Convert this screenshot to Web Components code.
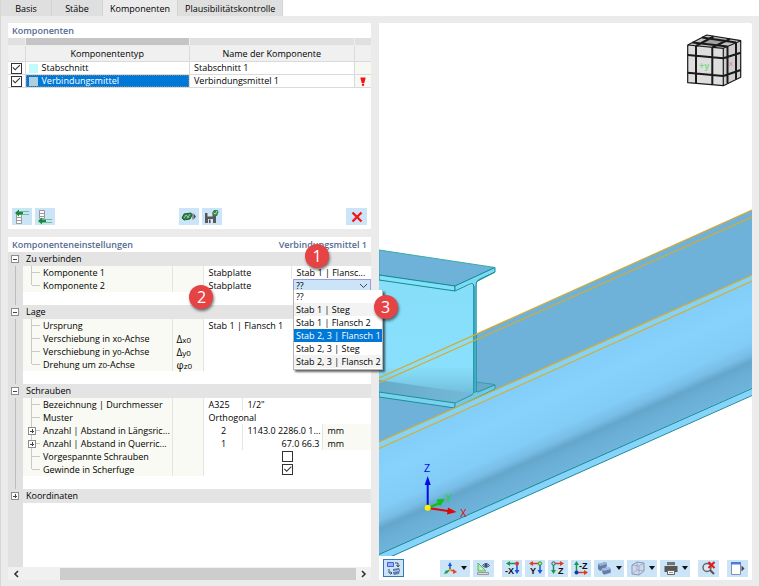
<!DOCTYPE html>
<html lang="de">
<head>
<meta charset="utf-8">
<title>Komponenten</title>
<style>
body { margin: 0; background: #ebebeb; color: #000; font: 500 9px/13px "Open Sans", "Noto Sans", sans-serif; }
</style>
</head>
<body>
<joint-app></joint-app>
<script>
const define = (name, html, setup) => {
  const template = document.createElement('template');
  template.innerHTML = html;
  customElements.define(name, class extends HTMLElement {
    constructor() {
      super();
      this.attachShadow({ mode: 'open' }).append(template.content.cloneNode(true));
    }
    connectedCallback() { if (setup) setup(this, this.shadowRoot); }
  });
};

/* Numbered red callout */
define('call-out', `
<style>
:host { position: absolute; z-index: 5; width: 24px; height: 24px; border-radius: 50%; background: #e64345; color: #fff;
  font: 16px/24px "Open Sans", sans-serif; text-align: center; box-shadow: 1px 2px 3px #0008; }
</style><slot></slot>`);

/* Blue tool button, optionally with a menu arrow */
define('tool-button', `
<style>
:host { display: block; }
button { display: flex; align-items: center; justify-content: center; gap: 3px; box-sizing: border-box; min-width: 20px; height: 17px;
  margin: 0; padding: 0 1px; border: 0; background: #cce4f7; font: inherit; }
:host([wide]) button { min-width: 21px; }
:host([menu]) button { min-width: 30px; }
:host([pressed]) button { min-width: 21px; height: 18px; border: 1px solid #3578b4; }
i { display: none; border: 3px solid transparent; border-top: 4px solid #111; border-bottom: 0; }
:host([menu]) i { display: block; }
</style><button type="button"><slot></slot><i></i></button>`, (host, root) => {
  root.querySelector('button').setAttribute('aria-label', host.getAttribute('label'));
});

/* White panel with a blue title line */
define('panel-box', `
<style>
:host { display: flex; flex-direction: column; background: #fff; min-width: 0; }
header { position: relative; display: flex; justify-content: space-between; padding: 1px 4px; color: #566b92; font-weight: 600; }
</style>
<header><slot name="title"></slot><slot name="detail"></slot></header><slot></slot>`);

define('tab-bar', `
<style>
:host { display: flex; align-items: stretch; height: 16px; background: #fff; }
button { border: 0; border-right: 1px solid #d3d3d3; margin: 0; padding: 0 7px; background: #dfdfdf; color: inherit; font: inherit; line-height: 15px; min-width: 51px; }
button[aria-selected=true] { background: #ebebeb; }
</style>
<button role="tab">Basis</button><button role="tab">Stäbe</button><button role="tab" aria-selected="true">Komponenten</button><button role="tab">Plausibilitätskontrolle</button>`);

const checkCss = `
input[type=checkbox] { appearance: none; display: block; box-sizing: border-box; width: 11px; height: 11px; margin: 0 auto; border: 1px solid #333; background: #fff; }
input[type=checkbox]:checked::after { content: ""; display: block; width: 9px; height: 9px; background: #333;
  clip-path: polygon(8% 48%, 16% 40%, 38% 62%, 86% 14%, 94% 22%, 38% 78%); }`;

define('component-table', `
<style>${checkCss}
:host { display: block; }
table { width: 100%; border-collapse: collapse; table-layout: fixed; }
th, td { padding: 0; height: 12px; line-height: 12px; border: 1px solid #dadada; border-left: 0; white-space: nowrap; font-weight: inherit; text-align: left; }
.strip td { height: 7px; border-color: #eee; border-top: 0; background: #e0e0e0; }
.strip td.on { background: #c5c5c5; }
thead th { height: 15px; text-align: center; background: #f0f0f0; }
td.name { padding-left: 4px; }
td.flag { background: #f8f8f2; text-align: center; }
td:last-child, th:last-child { border-right: 0; }
.type { display: flex; align-items: center; gap: 4px; padding-left: 3px; height: 12px; }
.type::before { content: ""; width: 9px; height: 9px; background: #c5fafd; }
.sel .type { background: #0078d7; color: #fff; outline: 1px dotted #7a8a90; outline-offset: -1px; }
.sel .type::before { background: #b0cfdc; }
svg { display: block; margin: auto; }
</style>
<table>
<colgroup><col style="width:17px"><col><col><col style="width:17px"></colgroup>
<thead>
<tr class="strip"><td></td><td class="on"></td><td></td><td></td></tr>
<tr><th></th><th scope="col">Komponententyp</th><th scope="col">Name der Komponente</th><th></th></tr>
</thead>
<tbody>
<tr><td><input type="checkbox" checked aria-label="Stabschnitt 1"></td><td><div class="type">Stabschnitt</div></td><td class="name">Stabschnitt 1</td><td class="flag"></td></tr>
<tr class="sel"><td><input type="checkbox" checked aria-label="Verbindungsmittel 1"></td><td><div class="type">Verbindungsmittel</div></td><td class="name">Verbindungsmittel 1</td><td class="flag"><svg width="6" height="9" viewBox="0 0 6 9"><path d="M.5.5h5v1L4.300 6H1.700L.5 1.500Z" fill="#f01414"/><circle cx="3" cy="7.700" r="1.200" fill="#f01414"/></svg></td></tr>
</tbody>
</table>`);

define('component-tools', `
<style>
:host { display: flex; justify-content: space-between; padding: 4px; }
div { display: flex; gap: 3px; }
svg { display: block; }
</style>
<div>
<tool-button label="Davor einfügen"><svg width="18" height="16" viewBox="0 0 18 16"><g fill="#fff" stroke="#999"><path d="M3.500 8.500h5v3h-5zM3.500 11.500h5v3h-5zM3.500 5.500h5v3h-5z"/></g><path d="M2 4 6 .5v2h4v3H6v2Z" fill="#138c3c"/><path d="M10 2.500h6M10 5.500h6" stroke="#6cc48e"/></svg></tool-button>
<tool-button label="Danach einfügen"><svg width="18" height="16" viewBox="0 0 18 16"><g fill="#fff" stroke="#999"><path d="M3.500 1.500h5v3h-5zM3.500 4.500h5v3h-5zM3.500 7.500h5v2h-5z"/></g><path d="M2 12 6 8.500v2h4v3H6v2Z" fill="#138c3c"/><path d="M10 10.500h6M10 13.500h6" stroke="#6cc48e"/></svg></tool-button>
</div>
<div>
<tool-button label="Bibliothek"><svg width="18" height="15" viewBox="0 0 18 15"><path d="m2 9 2-4 7-1 1 2-2 4-6 1Z" fill="#2f8549" stroke="#1d5c33"/><path d="m4 9 2-3 2 2 2-3M7 9l2-1" stroke="#96c9a2" fill="none"/><path d="M12.500 4.500h1v6h-1zM14 5l2 2.500L14 10Z" fill="#4b524d"/></svg></tool-button>
<tool-button label="Speichern"><svg width="18" height="15" viewBox="0 0 18 15"><path d="M2 4h9l2 2v8H2Z" fill="#55585e"/><path d="M4.500 4h5v3.500h-5zM5 10h5v4H5z" fill="#dbe8f2"/><path d="M6 10.500h1.500V14H6z" fill="#4b4c50"/><path d="m9 4 2-3h3.500l1 2-1.500 4h-3Z" fill="#2f8549"/><path d="m10.500 4 2 1 1.500-3" fill="none" stroke="#b9dfc3"/></svg></tool-button>
</div>
<div><tool-button wide label="Löschen"><svg width="12" height="12" viewBox="0 0 12 12"><path d="m1.500 1.500 9 9M10.500 1.500l-9 9" stroke="#f01818" stroke-width="2.400"/></svg></tool-button></div>`);

/* Combo box shown with its list open */
define('combo-box', `
<style>
:host { display: block; position: relative; }
select { appearance: none; display: block; box-sizing: border-box; width: 100%; height: 13px; margin: 0; padding: 0 2px; border: 1px solid #9c9be2; border-radius: 0;
  background: #cce4f7; color: inherit; font: inherit; line-height: 11px; }
.arrow { position: absolute; right: 3px; top: 4px; pointer-events: none; }
ul { position: absolute; z-index: 4; left: 0; top: 11px; width: max-content; margin: 0; padding: 0 1px 1px 2px; list-style: none; background: #fff;
  border: 1px solid #b5b5b5; border-top: 0; box-shadow: 2px 2px 2px #0009; }
li { margin: 0 -1px 0 -2px; padding: 0 1px 0 2px; white-space: nowrap; }
li:nth-child(even) { background: #f3f3f3; }
li[aria-selected=true] { background: #0078d7; color: #fff; }
call-out { right: -16px; top: 5px; }
</style>
<select aria-label="Komponente 2"><option>??</option><option>Stab 1 | Steg</option><option>Stab 1 | Flansch 2</option><option>Stab 2, 3 | Flansch 1</option><option>Stab 2, 3 | Steg</option><option>Stab 2, 3 | Flansch 2</option></select>
<svg class="arrow" width="9" height="6" viewBox="0 0 9 6"><path d="m1 1 3.500 3.500L8 1" fill="none" stroke="#444"/></svg>
<ul role="listbox"><li role="option">??</li><li role="option">Stab 1 | Steg</li><li role="option">Stab 1 | Flansch 2</li><li role="option" aria-selected="true">Stab 2, 3 | Flansch 1</li><li role="option">Stab 2, 3 | Steg</li><li role="option">Stab 2, 3 | Flansch 2</li><call-out>3</call-out></ul>`);

define('tree-toggle', `
<style>
:host { display: block; }
button { display: block; width: 8px; height: 8px; margin: 0; padding: 0; border: 1px solid #8d8d8d; box-sizing: border-box;
  background: linear-gradient(#444, #444) center / 4px 1px no-repeat #fff; }
:host([closed]) button { background: linear-gradient(#444, #444) center / 4px 1px no-repeat, linear-gradient(#444, #444) center / 1px 4px no-repeat, #fff; }
</style><button type="button"></button>`, (host, root) => {
  root.querySelector('button').setAttribute('aria-label', host.hasAttribute('closed') ? 'Aufklappen' : 'Zuklappen');
});

define('settings-tree', `
<style>${checkCss}
:host { display: flex; flex-direction: column; flex: 1; background: linear-gradient(#e1e1e1, #e1e1e1) left / 15px 100% no-repeat; }
table { width: 100%; border-collapse: collapse; table-layout: fixed; }
th, td { position: relative; height: 13px; padding: 0; font-weight: inherit; text-align: left; white-space: nowrap; line-height: 13px; }
td { padding-left: 4px; }
.head th, .head td { height: 14px; background: #e4e4e4; line-height: 14px; }
.head th { padding-left: 3px; }
.gut { padding: 0; background: linear-gradient(#bbb, #bbb) 7px 0 / 1px 100% no-repeat #e1e1e1; }
.head .gut { background: #e1e1e1; }
.gut tree-toggle { margin-left: 3px; }
.lab { padding-left: 20px; overflow: hidden; text-overflow: ellipsis; border-right: 1px solid #e4e4e0;
  background: linear-gradient(#c9c9c9, #c9c9c9) 8px 0 / 1px 100% no-repeat, linear-gradient(#c9c9c9, #c9c9c9) 9px 6px / 8px 1px no-repeat, #f9faf3; }
.last .lab { background: linear-gradient(#c9c9c9, #c9c9c9) 8px 0 / 1px 6px no-repeat, linear-gradient(#c9c9c9, #c9c9c9) 9px 6px / 8px 1px no-repeat, #f9faf3; }
.lab tree-toggle { position: absolute; left: 5px; top: 3px; }
.sym { padding-left: 3px; background: #f9faf3; border-right: 1px solid #e4e4e0; font-size: 10px; line-height: 12px; }
.line { border-left: 1px solid #e4e4e0; }
.num { text-align: center; padding: 0; }
.right { text-align: right; padding: 0 3px 0 0; }
.unit { background: #f9faf3; border-left: 1px solid #e4e4e0; }
.combo { padding: 0 0 0 1px; }
small { font-size: 8px; line-height: 0; }
.space { flex: 1; }
footer { display: flex; align-items: center; height: 13px; background: #f0f0f0; }
footer button { display: grid; place-items: center; width: 15px; height: 13px; margin: 0; padding: 0; border: 0; background: none; }
.track { flex: 1; height: 12px; padding-left: 37px; }
.thumb { height: 12px; background: #cdcdcd; }
call-out { right: -10px; top: 6px; }
</style>
<table>
<colgroup><col style="width:15px"><col><col style="width:31px"><col style="width:39px"><col style="width:49px"><col style="width:31px"><col style="width:48px"></colgroup>
<tbody>
<tr class="head"><td class="gut"><tree-toggle></tree-toggle></td><th colspan="6">Zu verbinden</th></tr>
<tr><td class="gut"></td><th class="lab">Komponente 1</th><td class="sym"></td><td colspan="2">Stabplatte</td><td colspan="2" class="line">Stab 1 | Flansc...</td></tr>
<tr class="last"><td class="gut"></td><th class="lab">Komponente 2</th><td class="sym"><call-out>2</call-out></td><td colspan="2">Stabplatte</td><td colspan="2" class="combo"><combo-box></combo-box></td></tr>
<tr><td class="gut"></td><td colspan="6"></td></tr>
<tr class="head"><td class="gut"><tree-toggle></tree-toggle></td><th colspan="6">Lage</th></tr>
<tr><td class="gut"></td><th class="lab">Ursprung</th><td class="sym"></td><td colspan="4">Stab 1 | Flansch 1</td></tr>
<tr><td class="gut"></td><th class="lab">Verschiebung in x<small>0</small>-Achse</th><td class="sym">Δ<small>x0</small></td><td colspan="4"></td></tr>
<tr><td class="gut"></td><th class="lab">Verschiebung in y<small>0</small>-Achse</th><td class="sym">Δ<small>y0</small></td><td colspan="4"></td></tr>
<tr class="last"><td class="gut"></td><th class="lab">Drehung um z<small>0</small>-Achse</th><td class="sym">φ<small>z0</small></td><td colspan="4"></td></tr>
<tr><td class="gut"></td><td colspan="6"></td></tr>
<tr class="head"><td class="gut"><tree-toggle></tree-toggle></td><th colspan="6">Schrauben</th></tr>
<tr><td class="gut"></td><th class="lab">Bezeichnung | Durchmesser</th><td class="sym"></td><td>A325</td><td colspan="3" class="line">1/2"</td></tr>
<tr><td class="gut"></td><th class="lab">Muster</th><td class="sym"></td><td colspan="4">Orthogonal</td></tr>
<tr><td class="gut"></td><th class="lab"><tree-toggle closed></tree-toggle>Anzahl | Abstand in Längsric...</th><td class="sym"></td><td class="num">2</td><td colspan="2" class="line">1143.0 2286.0 1...</td><td class="unit">mm</td></tr>
<tr><td class="gut"></td><th class="lab"><tree-toggle closed></tree-toggle>Anzahl | Abstand in Querric...</th><td class="sym"></td><td class="num">1</td><td colspan="2" class="right line">67.0 66.3</td><td class="unit">mm</td></tr>
<tr><td class="gut"></td><th class="lab">Vorgespannte Schrauben</th><td class="sym"></td><td colspan="4" class="num"><input type="checkbox" aria-label="Vorgespannte Schrauben"></td></tr>
<tr class="last"><td class="gut"></td><th class="lab">Gewinde in Scherfuge</th><td class="sym"></td><td colspan="4" class="num"><input type="checkbox" checked aria-label="Gewinde in Scherfuge"></td></tr>
<tr><td class="gut"></td><td colspan="6"></td></tr>
<tr class="head"><td class="gut"><tree-toggle closed></tree-toggle></td><th colspan="6">Koordinaten</th></tr>
</tbody>
</table>
<div class="space"></div>
<footer><button type="button" aria-label="Nach links"><svg width="6" height="8" viewBox="0 0 6 8"><path d="M5 1 2 4l3 3" fill="none" stroke="#333" stroke-width="1.600"/></svg></button><div class="track"><div class="thumb"></div></div><button type="button" aria-label="Nach rechts"><svg width="6" height="8" viewBox="0 0 6 8"><path d="m1 1 3 3-3 3" fill="none" stroke="#333" stroke-width="1.600"/></svg></button></footer>`);

/* 3D view of the steel joint */
define('model-scene', `
<style>
:host { display: block; position: relative; flex: 1; min-height: 0; overflow: hidden; }
.scene { position: absolute; inset: 0; width: 100%; height: 100%; }
.cube { position: absolute; right: 9px; top: 11px; }
text { font: 500 10px "Liberation Sans", sans-serif; }
</style>
<svg class="scene" viewBox="379 23 373 533" preserveAspectRatio="xMinYMax slice">
<defs>
<linearGradient id="web" gradientUnits="userSpaceOnUse" x1="752" y1="281" x2="792" y2="370"><stop offset="0" stop-color="#83cef8"/><stop offset=".25" stop-color="#86d2fd"/><stop offset=".56" stop-color="#82cdf8"/><stop offset=".68" stop-color="#78bde6"/><stop offset=".75" stop-color="#65a6cb"/><stop offset=".84" stop-color="#6aaed5"/><stop offset="1" stop-color="#6fb4db"/></linearGradient>
<linearGradient id="plate" x1="0" y1="0" x2="0" y2="1"><stop offset="0" stop-color="#87def9"/><stop offset=".75" stop-color="#89e0fd"/><stop offset=".86" stop-color="#80d3ee"/><stop offset="1" stop-color="#70bddb"/></linearGradient>
<linearGradient id="foot" x1="0" y1="0" x2="1" y2="0"><stop offset="0" stop-color="#67abcb"/><stop offset="1" stop-color="#74b9d8"/></linearGradient>
</defs>
<path d="M752 210 379 378V442L752 275Z" fill="#6eb2d9"/>
<path d="M379 390h90v14L379 446Z" fill="#6eb2d9"/>
<path d="M379 280 455 291 474 283V394L379 381Z" fill="url(#plate)"/>
<path d="M379 380 455 391 472 393 455 403 379 392Z" fill="url(#foot)"/>
<path d="M379 392 455 403V408L379 397Z" fill="#78d2ed" stroke="#1c8f99"/>
<path d="M455 403 472 395 474 392V284L479 280 495 272 476 282V391L478 392 495 385V389L455 408Z" fill="#72c9e3" stroke="#1c8f99" stroke-width=".8"/>
<path d="M476 382 495 384.500 478 392 476 390Z" fill="#67a9c9" stroke="#2a98a2" stroke-width=".8"/>
<path d="M379 250 495 267.500 455 286 379 275Z" fill="#6eb2d9" stroke="#3aa9ab"/>
<path d="M379 275 455 286V291L379 280Z" fill="#83e0fa" stroke="#108a91"/>
<path d="M455 286 495 267.500V272L479 279.500Q476 281 476 285V392H473.500V287Q474 282 470 284L455 291Z" fill="#7ddaf4" stroke="#158c95"/>
<path d="M474.500 286V392" stroke="#3da9bf" stroke-width="2"/>
<path d="M752 275 379 442V448L752 281Z" fill="#82d4fb"/>
<path d="M752 281 379 448V555L752 388Z" fill="url(#web)"/>
<path d="M752 388 379 555V562L752 395Z" fill="#86d4fb"/>
<path d="M752 388.500 379 554.500M752 395.500 379 562" stroke="#178892" fill="none"/>
<path d="M752 210 379 378M752 217 379 383M752 275 379 442M752 281 379 448.500" stroke="#d5ab34" stroke-width="1.200" fill="none"/>
<path d="M427.700 507V484" stroke="#0808e8" stroke-width="2"/><path d="m424.700 485 3-9 3 9Z" fill="#0808e8"/>
<path d="m428 508 20 3" stroke="#e30606" stroke-width="2"/><path d="m448 507.500 8.500 4.500-9.500 2.500Z" fill="#e30606"/>
<path d="m428 508 12-5" stroke="#12bc12" stroke-width="2"/><path d="m437 500 7-.5-4 6Z" fill="#08c808" stroke="#08c808"/>
<circle cx="427.700" cy="507.700" r="3" fill="#fff000"/>
<text x="424" y="472" fill="#0808e8">Z</text><text x="445" y="502" fill="#10e010" font-weight="700">Y</text><text x="460" y="516.500" fill="#e30606">X</text>
</svg>
<svg class="cube" width="58" height="54" viewBox="0 0 58 54">
<path d="m2.700 11 35.600 3.300v37.400L2.700 48.700Z" fill="#dedede"/>
<path d="m2.700 11 19-10 34 5-17.400 8.300Z" fill="#c4c4c4"/>
<path d="m14 9 12-6 18 3-12 6Z" fill="#a3a3a3"/>
<path d="m38.300 14.300 17.400-7.600v36.600l-17.400 8.400Z" fill="#cecece"/>
<g fill="none" stroke="#1a1a1a" stroke-linejoin="round"><path stroke-width="1.200" d="m2.700 11 35.600 3.300v37.400L2.700 48.700ZM2.700 11l19-10 34 5.700v36.600l-17.400 8.400M38.300 14.300l17.400-7.600"/><path stroke-width="2" d="M11 12v37M27.300 13.500v37.300M2.700 21l35.600 3.300 17.400-5.600M2.700 38.700 38.300 42l17.400-6M42.500 12.500v37M51 9v36.500M11 12 28.500 2.500M27.300 13.300 45 5M7.500 8.500l35 4M17 3.500l34 5"/></g>
<text x="14" y="35" style="font-size:9px;font-weight:700" fill="#7bdb85">+y</text><text x="44" y="32" style="font-size:8px" fill="#ec7d7d">x</text>
</svg>`);

define('view-tools', `
<style>
:host { display: flex; align-items: center; gap: 3px; padding: 3px 4px; height: 18px; }
span { flex: 1; }
.gap { margin-left: 5px; }
svg { display: block; }
text { font: 700 9px "Liberation Sans", sans-serif; fill: #111; }
</style>
<tool-button pressed label="Ansicht wechseln"><svg width="17" height="16" viewBox="0 0 17 16"><path d="M2.500 2.500h6v4h-6Z" fill="#9db4f4" stroke="#3f62dc"/><path d="M10 3h3v3M11.500 5 13 7l1.500-2M4 9v4h3M5.500 11.500 7 13l-1.500 1.500" fill="none" stroke="#444b5a"/><path d="m8 9 6-1 1 2-1 4-5 1-1-2Z" fill="#5d7daa"/><path d="m8 11.500 6-1" stroke="#cde"/></svg></tool-button>
<span></span>
<tool-button menu label="Achsen"><svg width="15" height="15" viewBox="0 0 15 15"><path d="M7 9V4" stroke="#1e51d9" stroke-width="1.500"/><path d="m5 5 2-4 2 4Z" fill="#1e51d9"/><path d="m7 9-4 2" stroke="#18a048" stroke-width="1.500"/><path d="m1 13 2-4 2 3Z" fill="#18a048"/><path d="m7 9 4 1" stroke="#e4472c" stroke-width="1.500"/><path d="m10 8 4 3-4 2Z" fill="#e4472c"/><circle cx="7" cy="9" r="1.300" fill="#e2b300"/></svg></tool-button>
<tool-button wide label="Maße anzeigen"><svg width="17" height="15" viewBox="0 0 17 15"><path d="m3 2 8 8H3Z" fill="#b8e9b4" stroke="#57bd64"/><path d="M5 7v1h2Z" fill="#fff"/><path d="M2.500 11.500h11v2h-11z" fill="#ddd" stroke="#999"/><path d="M7.500 4.500q3.500-4 7 0-3.500 3.500-7 0Z" fill="#f5f5ff" stroke="#37435f"/><circle cx="11" cy="4.500" r="1.700" fill="#314a94"/></svg></tool-button>
<tool-button class="gap" label="Ansicht X"><svg width="18" height="16" viewBox="0 0 18 16"><path d="M12 3.500H6" stroke="#139a50" stroke-width="1.500"/><path d="m7 1-4 2.500L7 6Z" fill="#139a50"/><path d="M14 4v7" stroke="#1e51d9" stroke-width="1.500"/><path d="m11.500 10 2.500 4 2.500-4Z" fill="#1e51d9"/><circle cx="14" cy="3.500" r="2" fill="#e03b20"/><text x="2" y="14">-X</text></svg></tool-button>
<tool-button label="Ansicht Y"><svg width="18" height="16" viewBox="0 0 18 16"><path d="M12 3.500H6" stroke="#df3d22" stroke-width="1.500"/><path d="m7 1-4 2.500L7 6Z" fill="#df3d22"/><path d="M14 4v7" stroke="#1e51d9" stroke-width="1.500"/><path d="m11.500 10 2.500 4 2.500-4Z" fill="#1e51d9"/><circle cx="14" cy="3.500" r="1.700" fill="#e5e838" stroke="#139a50"/><text x="4" y="14">Y</text></svg></tool-button>
<tool-button label="Ansicht Z"><svg width="18" height="16" viewBox="0 0 18 16"><path d="M6 3.500h6" stroke="#df3d22" stroke-width="1.500"/><path d="m11 1 4 2.500L11 6Z" fill="#df3d22"/><path d="M4.500 4v7" stroke="#139a50" stroke-width="1.500"/><path d="m2 10 2.500 4L7 10Z" fill="#139a50"/><circle cx="4.500" cy="3.500" r="1.700" fill="#e5e838" stroke="#1e51d9"/><text x="9" y="14">Z</text></svg></tool-button>
<tool-button label="Ansicht -Z"><svg width="18" height="16" viewBox="0 0 18 16"><path d="M4.500 12V5" stroke="#139a50" stroke-width="1.500"/><path d="m2 5 2.500-4L7 5Z" fill="#139a50"/><path d="M5 12.500h8" stroke="#df3d22" stroke-width="1.500"/><path d="m12 10 4 2.500-4 2.500Z" fill="#df3d22"/><circle cx="4.500" cy="12.500" r="2" fill="#1738a5"/><text x="7" y="9">-Z</text></svg></tool-button>
<tool-button menu label="Darstellung"><svg width="16" height="15" viewBox="0 0 16 15"><path d="m1 3 8-2 1 3-1 4-6 2-2-2Z" fill="#627fab"/><path d="m1 3 8-2 1 2-7 2Z" fill="#9bb2d2"/><path d="m5 8 7-2 2 2v4l-7 2-2-2Z" fill="#627fab" stroke="#cce4f7" stroke-width=".6"/><path d="m5 8 7-2 2 2-7 2Z" fill="#a6bbd8"/></svg></tool-button>
<tool-button menu label="Drahtmodell"><svg width="16" height="15" viewBox="0 0 16 15"><path d="m2 4 5-3 7 1v8l-5 4-7-1Z" fill="#d0d9ec" stroke="#8c98b6"/><path d="m2 4 7 1 5-3M9 5v9M7 1v8l-5 4M7 9l7 1" fill="none" stroke="#97a2bd" stroke-width=".8"/></svg></tool-button>
<tool-button menu label="Drucken"><svg width="16" height="15" viewBox="0 0 16 15"><path d="M4 1h8v4H4z" fill="#727272"/><path d="M1.500 5h13v6h-13z" fill="#555"/><path d="M4 4h8v1H4z" fill="#ccc"/><path d="M4.500 9.500h7v4h-7z" fill="#f5f5f5" stroke="#666"/><path d="M6 11.500h4" stroke="#999"/></svg></tool-button>
<tool-button class="gap" wide label="Auswahl aufheben"><svg width="17" height="15" viewBox="0 0 17 15"><circle cx="7" cy="6.500" r="4" fill="#dce7f2" stroke="#666" stroke-width="1.500"/><path d="m10 9 4 4" stroke="#555" stroke-width="2"/><path d="m8.500 1 6 6M14.500 1l-6 6" stroke="#e51818" stroke-width="2"/></svg></tool-button>
<tool-button class="gap" wide label="Fenster öffnen"><svg width="17" height="15" viewBox="0 0 17 15"><path d="M2.500 1.500h9v12h-9z" fill="#fff" stroke="#8190ae"/><path d="M2 1h10v2.500H2z" fill="#4a7ce0"/><path d="m12.500 4.500 3 3-3 3Z" fill="#444"/></svg></tool-button>`);

define('joint-app', `
<style>
:host { display: flex; flex-direction: column; min-height: 100vh; box-sizing: border-box; border-left: 1px solid #d7d7d7; border-right: 1px solid #d2d2d2; background: #ebebeb; }
main { flex: 1; display: grid; grid-template-columns: 363fr 373fr; gap: 8px; padding: 7px 7px 6px; }
.left { display: grid; grid-template-rows: 206fr 343fr; gap: 8px; min-width: 0; }
.view { display: flex; flex-direction: column; background: #fff; border-top-right-radius: 2px; }
.space { flex: 1; }
call-out { right: 42px; top: 7px; }
</style>
<tab-bar role="tablist"></tab-bar>
<main>
<div class="left">
<panel-box><span slot="title">Komponenten</span><component-table></component-table><div class="space"></div><component-tools></component-tools></panel-box>
<panel-box><span slot="title">Komponenteneinstellungen</span><span slot="detail">Verbindungsmittel 1<call-out>1</call-out></span><settings-tree></settings-tree></panel-box>
</div>
<div class="view"><model-scene></model-scene><view-tools></view-tools></div>
</main>`);
</script>
</body>
</html>
